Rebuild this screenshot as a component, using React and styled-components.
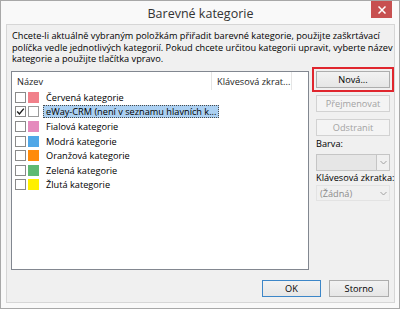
import React from 'react'
import styled, { createGlobalStyle } from 'styled-components'

const GlobalStyle = createGlobalStyle`
  html, body {
    margin: 0;
    padding: 0;
    background: #ffffff;
  }
  * {
    box-sizing: border-box;
  }
`

const Window = styled.div`
  width: 400px;
  height: 309px;
  border: 1px solid #a8a8a8;
  background: #f9f9f9;
  padding: 0 4px 5px 5px;
  display: flex;
  flex-direction: column;
  font-family: 'Open Sans', 'Noto Sans', sans-serif;
  color: #000;
`

const TitleBar = styled.div`
  height: 23px;
  display: grid;
  grid-template-columns: 1fr auto 1fr;
  align-items: center;
`

const Title = styled.div`
  grid-column: 2;
  font-size: 12.5px;
  color: #333;
  padding-top: 1px;
`

const CloseButton = styled.div`
  grid-column: 3;
  justify-self: end;
  align-self: start;
  width: 21px;
  height: 17px;
  margin-right: 3px;
  background: #c75050;
  display: flex;
  align-items: center;
  justify-content: center;
`

const Client = styled.div`
  flex: 1;
  border: 1px solid #d6d6d6;
  background: #f0f0f0;
  padding: 0 4px 4px 4px;
  display: flex;
  flex-direction: column;
  font-size: 9.2px;
`

const Description = styled.div`
  height: 46px;
  padding: 5px 0 0 1px;
  line-height: 11.5px;
  white-space: nowrap;
`

const Body = styled.div`
  display: flex;
  gap: 7px;
  height: 199px;
`

const ListBox = styled.div`
  width: 298px;
  border: 1px solid #828790;
  background: #fff;
`

const Header = styled.div`
  display: flex;
  height: 18px;
`

const HeaderCell = styled.div`
  width: ${p => p.$width}px;
  border-right: 1px solid #e5e5e5;
  padding-left: 5px;
  display: flex;
  align-items: center;
  white-space: nowrap;
  color: #1e1e1e;
`

const Row = styled.div`
  display: flex;
  align-items: center;
  height: 14.6px;
  padding-left: 3px;
`

const CheckBox = styled.div`
  width: 11px;
  height: 11px;
  border: 1px solid #8a8a8a;
  background: #fff;
  margin-right: 2px;
  display: flex;
  align-items: center;
  justify-content: center;
`

const Swatch = styled.div`
  width: 11px;
  height: 11px;
  background: ${p => p.$color || '#fff'};
  border: ${p => (p.$color ? 'none' : '1px solid #9a9a9a')};
`

const Label = styled.div`
  margin-left: 4px;
  padding: 0 2px;
  height: 13px;
  line-height: 11px;
  white-space: nowrap;
  background: ${p => (p.$selected ? '#abd0f2' : 'transparent')};
  border: 1px dotted ${p => (p.$selected ? '#4a4a4a' : 'transparent')};
`

const SideColumn = styled.div`
  width: 74px;
  display: flex;
  flex-direction: column;
`

const Button = styled.div`
  height: 17px;
  width: ${p => p.$width || 74}px;
  margin-bottom: ${p => p.$gap || 0}px;
  display: flex;
  align-items: center;
  justify-content: center;
  border: 1px solid ${p => (p.$disabled ? '#d2d2d2' : p.$default ? '#3c86c8' : '#adadad')};
  background: ${p => (p.$disabled ? '#f4f4f4' : 'linear-gradient(#f2f2f2, #e6e6e6)')};
  color: ${p => (p.$disabled ? '#a3a3a3' : '#000')};
  outline: ${p => (p.$marked ? '2px solid #e0262e' : 'none')};
  outline-offset: 2px;
`

const FieldLabel = styled.div`
  height: 13px;
  line-height: 13px;
  white-space: nowrap;
  margin-top: ${p => p.$top || 0}px;
`

const Combo = styled.div`
  margin-top: ${p => p.$top || 0}px;
  height: ${p => p.$height}px;
  display: flex;
  border: 1px solid ${p => (p.$boxed ? '#c5c5c5' : '#e3e3e3')};
  background: ${p => (p.$boxed ? '#e6e6e6' : '#f0f0f0')};
  color: #8c8c8c;
`

const ComboText = styled.div`
  flex: 1;
  padding-left: 3px;
  display: flex;
  align-items: center;
`

const ComboArrow = styled.div`
  width: 13px;
  display: flex;
  align-items: center;
  justify-content: center;
  background: ${p => (p.$boxed ? '#f0f0f0' : 'transparent')};
  border-left: 1px solid ${p => (p.$boxed ? '#c5c5c5' : 'transparent')};
`

const Footer = styled.div`
  margin-top: 10px;
  display: flex;
  justify-content: flex-end;
  gap: 8px;
  padding-right: 1px;
`

const Check = () => (
  <svg width="9" height="9" viewBox="0 0 9 9">
    <polyline points="1.2,4.6 3.4,6.9 7.8,1.6" fill="none" stroke="#1a1a1a" strokeWidth="1.4" />
  </svg>
)

const Chevron = () => (
  <svg width="7" height="5" viewBox="0 0 7 5">
    <polyline points="0.5,1 3.5,4 6.5,1" fill="none" stroke="#a0a0a0" strokeWidth="1" />
  </svg>
)

const categories = [
  { name: 'Červená kategorie', color: '#f1808a' },
  { name: 'eWay-CRM (není v seznamu hlavních k...', checked: true, selected: true },
  { name: 'Fialová kategorie', color: '#e58bbd' },
  { name: 'Modrá kategorie', color: '#50a7e7' },
  { name: 'Oranžová kategorie', color: '#ff8b0a' },
  { name: 'Zelená kategorie', color: '#5fba72' },
  { name: 'Žlutá kategorie', color: '#fff000' },
]

const App = () => (
  <>
    <GlobalStyle />
    <Window>
      <TitleBar>
        <Title>Barevné kategorie</Title>
        <CloseButton>
          <svg width="8" height="8" viewBox="0 0 8 8">
            <path d="M0.5 0.5 L7.5 7.5 M7.5 0.5 L0.5 7.5" stroke="#fff" strokeWidth="1.5" />
          </svg>
        </CloseButton>
      </TitleBar>
      <Client>
        <Description>
          Chcete-li aktuálně vybraným položkám přiřadit barevné kategorie, použijte zaškrtávací
          <br />
          políčka vedle jednotlivých kategorií. Pokud chcete určitou kategorii upravit, vyberte název
          <br />
          kategorie a použijte tlačítka vpravo.
        </Description>
        <Body>
          <ListBox>
            <Header>
              <HeaderCell $width={200}>Název</HeaderCell>
              <HeaderCell $width={80}>Klávesová zkrat...</HeaderCell>
            </Header>
            {categories.map(cat => (
              <Row key={cat.name}>
                <CheckBox>{cat.checked && <Check />}</CheckBox>
                <Swatch $color={cat.color} />
                <Label $selected={cat.selected}>{cat.name}</Label>
              </Row>
            ))}
          </ListBox>
          <SideColumn>
            <Button $marked $gap={7}>Nová...</Button>
            <Button $disabled $gap={7}>Přejmenovat</Button>
            <Button $disabled>Odstranit</Button>
            <FieldLabel $top={1}>Barva:</FieldLabel>
            <Combo $boxed $top={4} $height={17}>
              <ComboText />
              <ComboArrow $boxed>
                <Chevron />
              </ComboArrow>
            </Combo>
            <FieldLabel>Klávesová zkratka:</FieldLabel>
            <Combo $top={1} $height={16}>
              <ComboText>(Žádná)</ComboText>
              <ComboArrow>
                <Chevron />
              </ComboArrow>
            </Combo>
          </SideColumn>
        </Body>
        <Footer>
          <Button $default $width={59}>OK</Button>
          <Button $width={60}>Storno</Button>
        </Footer>
      </Client>
    </Window>
  </>
)

export default App
